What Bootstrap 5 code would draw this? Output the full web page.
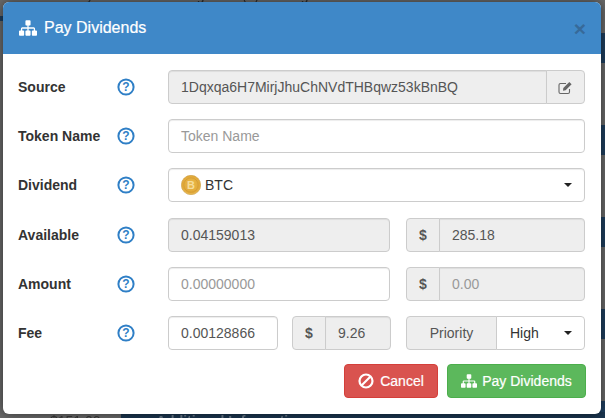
<!DOCTYPE html>
<html lang="en">
<head>
<meta charset="utf-8">
<title>Pay Dividends</title>
<link href="https://cdn.jsdelivr.net/npm/bootstrap@5.3.0/dist/css/bootstrap.min.css" rel="stylesheet">
<style>
html,body{height:100%;overflow:hidden}
body{background:#6b6b6b;font-family:"Liberation Sans",Arial,sans-serif;font-size:14px;color:#333;position:relative}
.stage-bg{position:absolute;inset:0;overflow:hidden;color:#2a2a2a}
.stage-bands{position:absolute;right:0;top:0;bottom:0;width:10px;background:repeating-linear-gradient(180deg,#6b6b6b 0,#6b6b6b 33px,#1f3f5f 33px,#1f3f5f 63px,#6b6b6b 63px,#6b6b6b 92px)}
.stage-left{position:absolute;left:0;top:16px;width:4px;height:5px;background:#1f3f5f}
.stage-panel{position:absolute;left:121px;right:0;top:412px;bottom:0;background:#1b3650}
.bg-word{position:absolute;font-size:14px;line-height:16px;filter:blur(.5px);white-space:nowrap;color:#2b2b2b}
.bg-word-top{top:-13px}
.bg-word-bottom{top:413px;color:#3a3a3a}
.bg-word-light{color:#6d7d8d;font-weight:700;left:156px}
.dialog-box{position:relative;width:598px;height:412px;margin:2px 0 0 3px;border:0;border-radius:6px;box-shadow:0 0 12px rgba(0,0,0,.55);overflow:hidden;background:#fff}
.dialog-head{height:52px;background:#3f88c8;color:#fff;border:0;border-radius:0;padding:0 15px 0 16px;display:flex;align-items:center}
.dialog-title{font-size:16px;font-weight:400;line-height:20px;margin:0;-webkit-text-stroke:.2px #fff}
.sitemap-ico{width:18px;height:18px;fill:currentColor;margin-right:7px;flex:none}
.close-x{margin-left:auto;background:none;border:0;padding:0;font-size:21px;font-weight:700;line-height:1;color:#376a99;margin-right:0}
.dialog-main{padding:16px 16px 0 15px}
.field-row{display:flex;align-items:center;height:34px;margin-bottom:15px}
.field-row-gap{margin-bottom:16px}
.field-row-last{margin-bottom:14px}
.field-name{width:99px;font-weight:700;color:#333;margin:0;flex:none}
.help-ico{width:18px;height:18px;margin-right:33px;flex:none;display:block}
.control-flat{height:34px;font-size:14px;padding:6px 12px;border:1px solid #ccc;border-radius:4px;color:#555;line-height:20px;box-shadow:inset 0 1px 1px rgba(0,0,0,.075);font-family:inherit}
.control-flat:disabled,.control-flat[readonly]{background:#eee;opacity:1;color:#555}
.control-flat::placeholder{color:#999;opacity:1}
.addon-flat{height:34px;font-size:14px;padding:6px 12px;background:#eee;border:1px solid #ccc;color:#555;border-radius:4px;line-height:20px}
.addon-dollar{width:34px;padding:0;justify-content:center;font-weight:700;flex:none}
.addon-edit{width:39px;padding:0;justify-content:center;flex:none}
.edit-ico{width:15px;height:15px}
.pick-box{flex:1;height:34px;background:#fff;border:1px solid #ccc;border-radius:4px;padding:0 12px;display:flex;align-items:center;color:#333;box-shadow:inset 0 1px 1px rgba(0,0,0,.075)}
.coin-ico{width:20px;height:20px;margin-right:4px;flex:none}
.caret-down{width:0;height:0;border-top:4px solid #222;border-left:4px solid transparent;border-right:4px solid transparent;margin-left:auto}
.wide-left{width:222px;flex:none}
.wide-right{width:179px;flex:none;margin-left:16px}
.fee-left{width:110px;flex:none}
.fee-mid{width:99px;flex:none;margin-left:14px}
.fee-right{width:179px;flex:none;margin-left:15px;flex-wrap:nowrap}
.priority-tag{width:91px;justify-content:center;padding:0;flex:none}
.priority-pick{flex:1;height:34px;border:1px solid #ccc;border-radius:0 4px 4px 0;padding:0 12px 0 13px;display:flex;align-items:center;color:#333;background:#fff}
.dialog-foot{display:flex;justify-content:flex-end;gap:9px;margin-right:-1px}
.act-btn{height:34px;font-size:14px;padding:0 12px;border-radius:4px;display:inline-flex;align-items:center;color:#fff;-webkit-text-stroke:.2px #fff;line-height:20px}
.act-cancel{width:94px;background:#d9534f;border:1px solid #d43f3a;justify-content:center}
.act-pay{width:139px;background:#5cb85c;border:1px solid #4cae4c;justify-content:center}
.act-ico{width:16px;height:16px;margin-right:5px;fill:#fff;flex:none}
.act-cancel .act-ico{fill:none;margin-right:6px}
</style>
</head>
<body>
<div class="stage-bg">
  <div class="stage-bands"></div>
  <div class="stage-left"></div>
  <div class="stage-panel"></div>
  <span class="bg-word bg-word-top" style="left:50px">History</span>
  <span class="bg-word bg-word-top" style="left:150px">Exchanges</span>
  <span class="bg-word bg-word-top" style="left:242px">(0)</span>
  <span class="bg-word bg-word-top" style="left:265px">Betting</span>
  <span class="bg-word bg-word-bottom" style="left:50px">$151.00</span>
  <span class="bg-word bg-word-bottom bg-word-light">Additional Information</span>
</div>

<div class="modal-content dialog-box">
  <div class="modal-header dialog-head">
    <svg class="sitemap-ico" viewBox="0 0 1792 1792"><path d="M1792 1248v320q0 40-28 68t-68 28h-320q-40 0-68-28t-28-68v-320q0-40 28-68t68-28h96v-192h-512v192h96q40 0 68 28t28 68v320q0 40-28 68t-68 28h-320q-40 0-68-28t-28-68v-320q0-40 28-68t68-28h96v-192h-512v192h96q40 0 68 28t28 68v320q0 40-28 68t-68 28h-320q-40 0-68-28t-28-68v-320q0-40 28-68t68-28h96v-192q0-52 38-90t90-38h512v-192h-96q-40 0-68-28t-28-68v-320q0-40 28-68t68-28h320q40 0 68 28t28 68v320q0 40-28 68t-68 28h-96v192h512q52 0 90 38t38 90v192h96q40 0 68 28t28 68z"/></svg>
    <h4 class="modal-title dialog-title">Pay Dividends</h4>
    <button type="button" class="close-x" aria-label="Close">×</button>
  </div>
  <div class="modal-body dialog-main">
    <div class="field-row">
      <label class="field-name">Source</label>
      <svg class="help-ico" viewBox="0 0 18 18"><circle cx="9" cy="9" r="7.600" fill="none" stroke="#2f7fc6" stroke-width="2"/><text x="9" y="13.200" text-anchor="middle" font-family="Liberation Sans" font-weight="700" font-size="12" fill="#2f7fc6">?</text></svg>
      <div class="input-group flex-grow-1">
        <input class="form-control control-flat" readonly value="1Dqxqa6H7MirjJhuChNVdTHBqwz53kBnBQ">
        <span class="input-group-text addon-flat addon-edit">
          <svg class="edit-ico" viewBox="0 0 15 15" fill="none"><path d="M11.500 9V12a1.500 1.500 0 0 1-1.500 1.500H2.500A1.500 1.500 0 0 1 1 12V5A1.500 1.500 0 0 1 2.500 3.500H8" stroke="#666" stroke-width="1.100"/><path d="M5.300 8 11.300 2 13.600 4.300 7.600 10.300 5 10.700Z" fill="#666"/></svg>
        </span>
      </div>
    </div>
    <div class="field-row">
      <label class="field-name">Token Name</label>
      <svg class="help-ico" viewBox="0 0 18 18"><circle cx="9" cy="9" r="7.600" fill="none" stroke="#2f7fc6" stroke-width="2"/><text x="9" y="13.200" text-anchor="middle" font-family="Liberation Sans" font-weight="700" font-size="12" fill="#2f7fc6">?</text></svg>
      <input class="form-control control-flat flex-grow-1 w-auto" placeholder="Token Name">
    </div>
    <div class="field-row field-row-gap">
      <label class="field-name">Dividend</label>
      <svg class="help-ico" viewBox="0 0 18 18"><circle cx="9" cy="9" r="7.600" fill="none" stroke="#2f7fc6" stroke-width="2"/><text x="9" y="13.200" text-anchor="middle" font-family="Liberation Sans" font-weight="700" font-size="12" fill="#2f7fc6">?</text></svg>
      <div class="pick-box">
        <svg class="coin-ico" viewBox="0 0 20 20"><defs><radialGradient id="coinfill" cx="50%" cy="45%" r="60%"><stop offset="0" stop-color="#e9b949"/><stop offset=".75" stop-color="#e2a93a"/><stop offset="1" stop-color="#f0d078"/></radialGradient></defs><circle cx="10" cy="10" r="9.700" fill="url(#coinfill)" stroke="#c99a3c" stroke-width=".6"/><circle cx="10" cy="10" r="7.200" fill="none" stroke="#cf9a33" stroke-width=".7"/><text x="10" y="14" text-anchor="middle" font-family="Liberation Sans" font-weight="700" font-size="11" fill="#f5dd9c">B</text></svg>
        <span>BTC</span>
        <span class="caret-down"></span>
      </div>
    </div>
    <div class="field-row">
      <label class="field-name">Available</label>
      <svg class="help-ico" viewBox="0 0 18 18"><circle cx="9" cy="9" r="7.600" fill="none" stroke="#2f7fc6" stroke-width="2"/><text x="9" y="13.200" text-anchor="middle" font-family="Liberation Sans" font-weight="700" font-size="12" fill="#2f7fc6">?</text></svg>
      <input class="form-control control-flat wide-left" disabled value="0.04159013">
      <div class="input-group wide-right">
        <span class="input-group-text addon-flat addon-dollar">$</span>
        <input class="form-control control-flat" disabled value="285.18">
      </div>
    </div>
    <div class="field-row">
      <label class="field-name">Amount</label>
      <svg class="help-ico" viewBox="0 0 18 18"><circle cx="9" cy="9" r="7.600" fill="none" stroke="#2f7fc6" stroke-width="2"/><text x="9" y="13.200" text-anchor="middle" font-family="Liberation Sans" font-weight="700" font-size="12" fill="#2f7fc6">?</text></svg>
      <input class="form-control control-flat wide-left" placeholder="0.00000000">
      <div class="input-group wide-right">
        <span class="input-group-text addon-flat addon-dollar">$</span>
        <input class="form-control control-flat" disabled placeholder="0.00">
      </div>
    </div>
    <div class="field-row field-row-last">
      <label class="field-name">Fee</label>
      <svg class="help-ico" viewBox="0 0 18 18"><circle cx="9" cy="9" r="7.600" fill="none" stroke="#2f7fc6" stroke-width="2"/><text x="9" y="13.200" text-anchor="middle" font-family="Liberation Sans" font-weight="700" font-size="12" fill="#2f7fc6">?</text></svg>
      <input class="form-control control-flat fee-left" value="0.00128866">
      <div class="input-group fee-mid">
        <span class="input-group-text addon-flat addon-dollar">$</span>
        <input class="form-control control-flat" disabled value="9.26">
      </div>
      <div class="input-group fee-right">
        <span class="input-group-text addon-flat priority-tag">Priority</span>
        <div class="priority-pick"><span>High</span><span class="caret-down"></span></div>
      </div>
    </div>
    <div class="dialog-foot">
      <button type="button" class="btn act-btn act-cancel">
        <svg class="act-ico" viewBox="0 0 16 16"><circle cx="8" cy="8" r="6.500" stroke="#fff" stroke-width="2.200"/><path d="M3.500 12.500 12.500 3.500" stroke="#fff" stroke-width="2.200"/></svg>Cancel
      </button>
      <button type="button" class="btn act-btn act-pay">
        <svg class="act-ico" viewBox="0 0 1792 1792"><path d="M1792 1248v320q0 40-28 68t-68 28h-320q-40 0-68-28t-28-68v-320q0-40 28-68t68-28h96v-192h-512v192h96q40 0 68 28t28 68v320q0 40-28 68t-68 28h-320q-40 0-68-28t-28-68v-320q0-40 28-68t68-28h96v-192h-512v192h96q40 0 68 28t28 68v320q0 40-28 68t-68 28h-320q-40 0-68-28t-28-68v-320q0-40 28-68t68-28h96v-192q0-52 38-90t90-38h512v-192h-96q-40 0-68-28t-28-68v-320q0-40 28-68t68-28h320q40 0 68 28t28 68v320q0 40-28 68t-68 28h-96v192h512q52 0 90 38t38 90v192h96q40 0 68 28t28 68z"/></svg>Pay Dividends
      </button>
    </div>
  </div>
</div>
<script src="https://cdn.jsdelivr.net/npm/bootstrap@5.3.0/dist/js/bootstrap.bundle.min.js"></script>
</body>
</html>
